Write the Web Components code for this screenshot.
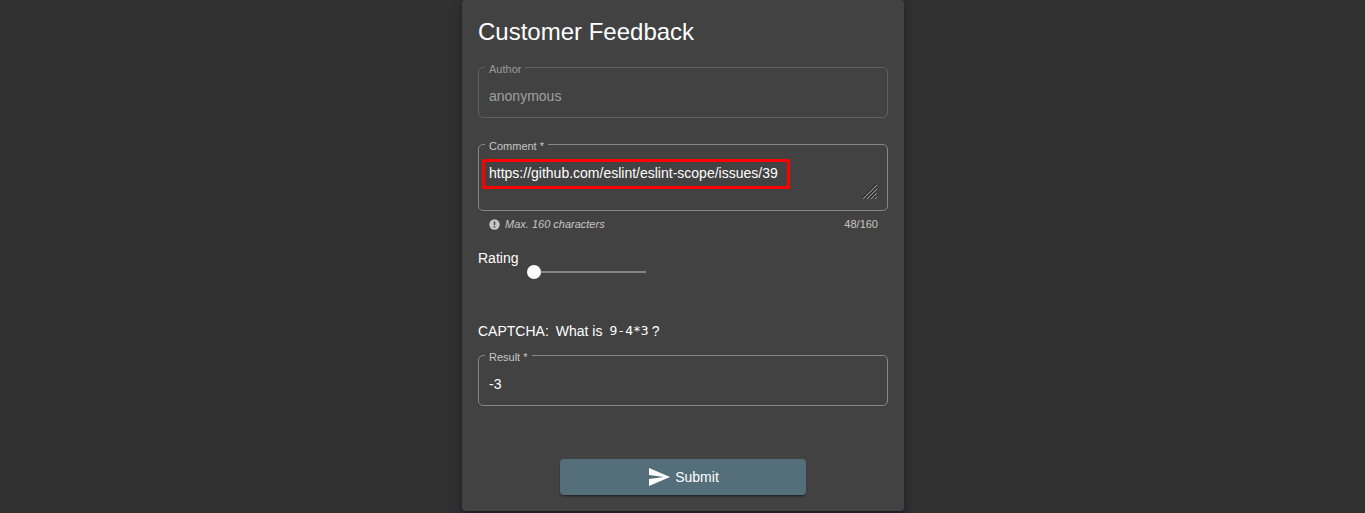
<!DOCTYPE html>
<html lang="en">
<head>
<meta charset="utf-8">
<title>Customer Feedback</title>
<style>
html { background: #303030; }
body { margin: 0; padding-left: 1px; color: #fff; font: 14px/20px "Liberation Sans", Arial, sans-serif; }
</style>
</head>
<body>
<feedback-card heading="Customer Feedback">
  <outlined-field label="Author" value="anonymous" disabled></outlined-field>
  <outlined-field label="Comment" value="https://github.com/eslint/eslint-scope/issues/39" required multiline marked>
    <field-hint count="48/160">Max. 160 characters</field-hint>
  </outlined-field>
  <rating-slider label="Rating"></rating-slider>
  <captcha-question expression="9-4*3"></captcha-question>
  <outlined-field label="Result" value="-3" required></outlined-field>
  <submit-button>Submit</submit-button>
</feedback-card>
<script>
class Base extends HTMLElement {
  constructor() {
    super();
    this.attachShadow({ mode: "open" });
  }
  connectedCallback() {
    this.shadowRoot.innerHTML = this.render();
  }
}

customElements.define("feedback-card", class extends Base {
  render() {
    return `<style>
      :host { display: block; box-sizing: border-box; width: 442px; max-width: 100%; margin: 0 auto 2px;
        padding: 16px; border-radius: 4px; background: #424242;
        box-shadow: 0 3px 5px -1px #0003, 0 6px 10px #0024, 0 1px 18px #0020; }
      h1 { margin: 0 0 12px; font-size: 24px; line-height: 32px; font-weight: 400; }
    </style>
    <h1>${this.getAttribute("heading")}</h1><slot></slot>`;
  }
});

customElements.define("outlined-field", class extends Base {
  render() {
    const has = name => this.hasAttribute(name);
    const value = this.getAttribute("value");
    const off = has("disabled") ? "disabled" : "";
    const control = has("multiline")
      ? `<textarea id="control" rows="1">${value}</textarea>
         <svg class="grip" viewBox="0 0 15 15" aria-hidden="true">
           <path d="M0 14L14 0M4 14L14 4M8 14L14 8M12 14L14 12" stroke="#2a2a2a"/>
           <path d="M1 15L15 1M5 15L15 5M9 15L15 9M13 15L15 13" stroke="#999"/></svg>`
      : `<input id="control" type="text" value="${value}" ${off}>`;
    return `<style>
      :host { display: block; margin-bottom: 19px; --line: #868686; --label: #c6c6c6; --text: #fff; }
      :host([disabled]) { --line: #606060; --label: #9a9a9a; --text: #a0a0a0; }
      fieldset { margin: 0; min-width: 0; padding: 11px 6px; border: 1px solid var(--line); border-radius: 5px; }
      legend { padding: 3px 4px 0; font-size: 11px; line-height: 12px; color: var(--label); }
      .box { position: relative; display: flex; margin: 0 4px; }
      input, textarea { flex: 1; min-width: 0; margin: 0; padding: 0; border: 0; outline: 0; background: none;
        font: inherit; line-height: 20px; height: 20px; color: var(--text); -webkit-text-fill-color: var(--text); opacity: 1; }
      textarea { height: 36px; resize: none; overflow: hidden; }
      .grip { position: absolute; right: 0; bottom: 0; width: 15px; height: 15px; }
      .mark { position: absolute; left: -7px; top: -4px; width: 302px; height: 24px; border: 3px solid #f00; border-radius: 1px; pointer-events: none; }
    </style>
    <fieldset><legend><label for="control">${this.getAttribute("label")}${has("required") ? " *" : ""}</label></legend>
      <div class="box">${control}${has("marked") ? '<span class="mark"></span>' : ""}</div>
    </fieldset><slot></slot>`;
  }
});

customElements.define("field-hint", class extends Base {
  render() {
    return `<style>
      :host { display: flex; align-items: center; margin: 5px 10px 0 11px; font-size: 11px; line-height: 16px; color: #c6c6c6; }
      svg { width: 11px; height: 11px; margin-right: 5px; }
      em { flex: 1; }
    </style>
    <svg viewBox="0 0 11 11" aria-hidden="true"><circle cx="5.5" cy="5.5" r="5.2" fill="#c6c6c6"/>
      <path d="M5.5 2.5V6M5.5 7V8.5" stroke="#424242" stroke-width="1.5"/></svg>
    <em><slot></slot></em><span>${this.getAttribute("count")}</span>`;
  }
});

customElements.define("rating-slider", class extends Base {
  render() {
    return `<style>
      :host { display: flex; align-items: flex-start; gap: 9px; margin: -3px 0 35px; height: 38px; }
      input { appearance: none; width: 126px; height: 14px; margin: 17px 0 0;
        background: linear-gradient(#858585, #858585) center / 112px 2px no-repeat; }
      input::-webkit-slider-thumb { appearance: none; width: 14px; height: 14px; border-radius: 50%; background: #fff; }
    </style>
    <label for="rating">${this.getAttribute("label")}</label>
    <input id="rating" type="range" min="1" max="5" value="1">`;
  }
});

customElements.define("captcha-question", class extends Base {
  render() {
    return `<style>
      :host { display: flex; gap: 7px; margin-bottom: 7px; }
      code { font: 13px/20px "DejaVu Sans Mono", monospace; margin-right: 3px; }
      .expr { display: flex; }
    </style>
    <span>CAPTCHA:</span><span>What is</span><span class="expr"><code>${this.getAttribute("expression")}</code>?</span>`;
  }
});

customElements.define("submit-button", class extends Base {
  render() {
    return `<style>
      :host { display: flex; justify-content: center; margin-top: 53px; }
      button { display: flex; align-items: center; justify-content: center; gap: 4px; width: 60%; height: 36px;
        padding: 0; border: 0; border-radius: 4px; background: #546e7a; color: #fff; font: inherit;
        box-shadow: 0 3px 1px -2px #0003, 0 2px 2px #0024, 0 1px 5px #0020; }
      svg { width: 24px; height: 24px; fill: #fff; }
    </style>
    <button type="submit"><svg viewBox="0 0 24 24" aria-hidden="true"><path d="M2.01 21L23 12 2.01 3 2 10l15 2-15 2z"/></svg><span><slot></slot></span></button>`;
  }
});
</script>
</body>
</html>
